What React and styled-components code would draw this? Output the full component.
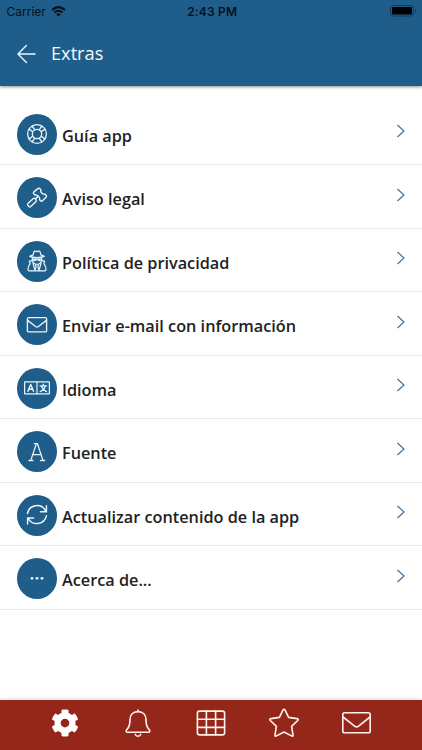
import React from 'react';
import styled, { createGlobalStyle } from 'styled-components';
import { FaCog } from 'react-icons/fa';

const GlobalStyle = createGlobalStyle`
  * {
    box-sizing: border-box;
  }

  body {
    margin: 0;
    background-color: #fff;
    font-family: 'Open Sans', 'Noto Sans', sans-serif;
  }
`;

const Screen = styled.div`
  display: flex;
  flex-direction: column;
  width: 422px;
  height: 750px;
  overflow: hidden;
  background-color: #fff;
`;

const Header = styled.header`
  flex: none;
  height: 86px;
  background-color: #1f5e8a;
  box-shadow: 0 1px 3px rgba(0, 0, 0, 0.45);
`;

const StatusBar = styled.div`
  display: grid;
  grid-template-columns: 1fr auto 1fr;
  align-items: center;
  height: 22px;
  padding: 0 5px 0 6.5px;
  color: #06111a;
  font-family: Inter, 'Liberation Sans', sans-serif;
  font-size: 12px;
`;

const Carrier = styled.div`
  display: flex;
  align-items: center;
  gap: 5.5px;
`;

const Clock = styled.div`
  padding-left: 1px;
  font-weight: 600;
  letter-spacing: 0.2px;
`;

const Battery = styled.svg`
  justify-self: end;
`;

const TitleBar = styled.div`
  display: flex;
  align-items: center;
  gap: 14px;
  height: 63px;
  padding-left: 17px;
`;

const Title = styled.h1`
  margin: 0 0 2px;
  color: #f4f9fc;
  font-size: 18.2px;
  font-weight: 400;
  line-height: 24px;
`;

const List = styled.ul`
  flex: 1;
  margin: 0;
  padding: 15.8px 0 0;
  list-style: none;
`;

const Row = styled.li`
  display: flex;
  align-items: center;
  height: 63.5px;
  padding: 2px 15px 0 16.5px;
  border-bottom: 1px solid #e9e9e9;
`;

const Badge = styled.div`
  display: flex;
  flex: none;
  align-items: center;
  justify-content: center;
  width: 40.5px;
  height: 41px;
  border-radius: 50%;
  background-color: #1f5e8a;
  color: #e9f4fb;
`;

const Label = styled.span`
  flex: 1;
  padding: 3px 0 0 5px;
  color: #222;
  font-size: 16.25px;
  font-weight: 600;
  line-height: 22px;
  white-space: nowrap;
`;

const Chevron = styled.svg`
  flex: none;
  margin-bottom: 6px;
`;

const Icon = styled.svg`
  display: block;
  flex: none;
  width: ${(props) => props.$size}px;
  height: ${(props) => props.$size}px;
  fill: none;
  stroke: currentColor;
  stroke-width: ${(props) => props.$stroke || 1.3};
  stroke-linecap: round;
  stroke-linejoin: round;
`;

const TabBar = styled.nav`
  display: flex;
  flex: none;
  align-items: flex-start;
  justify-content: center;
  height: 50px;
  padding-top: 8px;
  background-color: #95261a;
  box-shadow: 0 -1px 3px rgba(0, 0, 0, 0.15);
`;

const Tab = styled.div`
  display: flex;
  align-items: center;
  justify-content: center;
  width: 73px;
  height: 30px;
  color: #fff3ee;
`;

const CogIcon = styled(FaCog)`
  width: 28px;
  height: 28px;
  color: #fff;
`;

// All badge icons are drawn around the origin, one unit per pixel
function BadgeIcon({ stroke, children }) {
  return (
    <Icon $size={30} $stroke={stroke} viewBox="-15 -15 30 30">
      {children}
    </Icon>
  );
}

function LifeBuoy() {
  return (
    <BadgeIcon stroke={1.3}>
      <circle r="9.4" />
      <circle r="4.7" />
      {[0, 90, 180, 270].map((angle) => (
        <path
          key={angle}
          transform={`rotate(${angle})`}
          d="M2.2 -4.2L4.9 -8M4.2 -2.2L8 -4.9"
        />
      ))}
    </BadgeIcon>
  );
}

function Gavel() {
  return (
    <BadgeIcon stroke={1.4}>
      <path d="M-3.2 -6.1L1.2 -9.6Q2.2 -10.2 3 -9.3L3.8 -8.2Q3.3 -6.4 4.6 -5Q6 -3.5 7.8 -3.9L9.2 -2.7Q10 -1.7 9.2 -0.9L5.3 2.9Q4.3 3.6 3.5 2.8L2.6 1.7Q3 -0.1 1.6 -1.6Q0.2 -3.2 -1.9 -3L-3.3 -4.2Q-4.1 -5.3 -3.2 -6.1Z" />
      <path d="M0.9 -1.6L-1.5 0.8" />
      <path d="M-3.7 0.5Q-2.8 -0.2 -2 0.6L-0.9 1.8Q-0.2 2.8 -1 3.6L-6.3 8.6Q-7.2 9.4 -8 8.6L-9.3 7.2Q-9.9 6.4 -9.1 5.6Z" />
    </BadgeIcon>
  );
}

function Spy() {
  return (
    <BadgeIcon stroke={1.25}>
      <path d="M-7.2 -4.7Q-6 -5.5 -4.1 -5.8L-3 -9.2Q-2.5 -10.2 -1.4 -9.8L0 -9.3L1.4 -9.8Q2.5 -10.2 3 -9.2L4.1 -5.8Q6 -5.5 7.2 -4.7Q4.2 -3.5 0 -3.5Q-4.2 -3.5 -7.2 -4.7Z" />
      <path d="M-4.7 -3.2V-1Q-4.2 3.1 0 3.3Q4.2 3.1 4.7 -1V-3.2" />
      <path d="M-4.4 -2.3H4.4Q4.1 0 2.3 0Q0.8 0 0 -1.6Q-0.8 0 -2.3 0Q-4.1 0 -4.4 -2.3Z" fill="currentColor" strokeWidth="0.5" />
      <path d="M-5 -0.3L-7.6 0.2L-6.9 2.6Q-9 5.2 -9 8.6Q-8.9 9.8 -7.8 9.8H7.8Q8.9 9.8 9 8.6Q9 5.2 6.9 2.6L7.6 0.2L5 -0.3" />
      <path d="M-4 2.2L-2 9.5L-0.9 5.6L-1.5 4M4 2.2L2 9.5L0.9 5.6L1.5 4" />
    </BadgeIcon>
  );
}

function Envelope() {
  return (
    <BadgeIcon stroke={1.35}>
      <rect x="-9.6" y="-7.4" width="19.2" height="14.3" rx="1.2" />
      <path d="M-9.4 -4.6L-1.4 1.5Q0 2.5 1.4 1.5L9.4 -4.6" />
    </BadgeIcon>
  );
}

function Language() {
  return (
    <BadgeIcon stroke={1.2}>
      <rect x="-12.4" y="-6.1" width="24.8" height="12" rx="0.3" />
      <path d="M0 -6V5.9" />
      <path strokeWidth="1.5" strokeLinecap="butt" d="M-9.3 3.7L-6.3 -3.5L-3.3 3.7M-8.3 1.3H-4.3" />
      <path strokeWidth="1.3" d="M6.3 -3.9V-2.3M3 -2.2H9.6M8.3 -2.1Q7.4 1.6 3.2 3.6M4.3 -2.1Q5.4 1.6 9.5 3.6" />
    </BadgeIcon>
  );
}

function FontLetter() {
  return (
    <BadgeIcon stroke={1.3}>
      <path d="M-6.2 8.4L-0.6 -8.4H0.4L6 8.4M-2.7 -8.4H0.4M-4.4 2.7H4.1M-8 8.5H-4M3.6 8.5H7.6" />
    </BadgeIcon>
  );
}

function Refresh() {
  return (
    <BadgeIcon stroke={1.45}>
      <path d="M-9.6 -1.5A9.7 9.7 0 0 1 8.8 -3.6M9.4 -9.4V-3.3H3.4" strokeLinejoin="miter" />
      <path d="M9.4 0.7A9.7 9.7 0 0 1 -8.8 3.2M-9.4 8.9V3H-3.4" strokeLinejoin="miter" />
    </BadgeIcon>
  );
}

function Dots() {
  return (
    <BadgeIcon>
      {[-5, 0, 5].map((x) => (
        <circle key={x} cx={x} cy="-0.7" r="1.4" fill="currentColor" stroke="none" />
      ))}
    </BadgeIcon>
  );
}

const items = [
  { label: 'Guía app', icon: LifeBuoy },
  { label: 'Aviso legal', icon: Gavel },
  { label: 'Política de privacidad', icon: Spy },
  { label: 'Enviar e-mail con información', icon: Envelope },
  { label: 'Idioma', icon: Language },
  { label: 'Fuente', icon: FontLetter },
  { label: 'Actualizar contenido de la app', icon: Refresh },
  { label: 'Acerca de...', icon: Dots },
];

function MenuRow({ label, icon: RowIcon }) {
  return (
    <Row>
      <Badge>
        <RowIcon />
      </Badge>
      <Label>{label}</Label>
      <Chevron width="11" height="16" viewBox="0 0 11 16" fill="none" stroke="#3f7099" strokeWidth="1.15">
        <path d="M1.5 2L8 8L1.5 14" />
      </Chevron>
    </Row>
  );
}

function App() {
  return (
    <>
      <GlobalStyle />
      <Screen>
        <Header>
          <StatusBar>
            <Carrier>
              Carrier
              <svg width="15" height="11" viewBox="0 0 15 11" fill="none" stroke="currentColor" strokeWidth="2">
                <path d="M1 4.1Q7.5 -1.9 14 4.1" />
                <path d="M3.4 6.6Q7.5 2.9 11.6 6.6" />
                <path d="M5.2 8.2Q7.5 6.4 9.8 8.2L7.5 10.6Z" fill="currentColor" stroke="none" />
              </svg>
            </Carrier>
            <Clock>2:43 PM</Clock>
            <Battery width="27" height="12" viewBox="0 0 27 12">
              <rect x="0.5" y="0.5" width="23" height="10.5" rx="2.6" fill="none" stroke="#133a56" />
              <rect x="2" y="2" width="20" height="7.5" rx="1.3" fill="#000" />
              <path d="M25 4Q26.4 4.6 26.4 5.75Q26.4 6.9 25 7.5Z" fill="#133a56" />
            </Battery>
          </StatusBar>
          <TitleBar>
            <Icon $size={20} $stroke={1.4} viewBox="0 0 20 20" color="#eef6fb">
              <path d="M18 10H1M9.4 1.6L1 10L9.4 18.4" />
            </Icon>
            <Title>Extras</Title>
          </TitleBar>
        </Header>
        <List>
          {items.map((item) => (
            <MenuRow key={item.label} {...item} />
          ))}
        </List>
        <TabBar>
          <Tab>
            <CogIcon />
          </Tab>
          <Tab>
            <Icon $size={30} $stroke={1.6} viewBox="-15 -15 30 30">
              <path d="M0 -12.9V-11.4M0 -11.4C-5.4 -11.4 -8 -7.8 -8 -3.3C-8 3.2 -9.2 4.6 -11 6.4C-12.6 8 -11.7 9.2 -10.5 9.2H10.5C11.7 9.2 12.6 8 11 6.4C9.2 4.6 8 3.2 8 -3.3C8 -7.8 5.4 -11.4 0 -11.4Z" />
              <path d="M-2.7 11.4Q-2.2 13.3 0 13.3Q2.2 13.3 2.7 11.4" />
            </Icon>
          </Tab>
          <Tab>
            <Icon $size={30} $stroke={1.6} viewBox="-15 -15 30 30">
              <rect x="-13.6" y="-11.9" width="27.2" height="23.8" rx="2.2" />
              <path d="M-13.6 -3.7H13.6M-13.6 4.4H13.6M-4.6 -11.9V11.9M4.6 -11.9V11.9" />
            </Icon>
          </Tab>
          <Tab>
            <Icon $size={30} $stroke={1.6} viewBox="-15 -15 30 30">
              <path d="M-1.1 -12.9Q0 -14.6 1.1 -12.9L4.6 -5.6L13 -4.4Q15 -4 13.7 -2.5L7.6 3.4L9 11.8Q9.2 13.7 7.5 12.9L0 9L-7.5 12.9Q-9.2 13.7 -9 11.8L-7.6 3.4L-13.7 -2.5Q-15 -4 -13 -4.4L-4.6 -5.6Z" />
            </Icon>
          </Tab>
          <Tab>
            <Icon $size={30} $stroke={1.6} viewBox="-15 -15 30 30">
              <rect x="-14.2" y="-10.2" width="27.4" height="20" rx="1.8" />
              <path d="M-14 -6L-2.4 3.1Q-0.4 4.6 1.6 3.1L13 -6" />
            </Icon>
          </Tab>
        </TabBar>
      </Screen>
    </>
  );
}

export default App;
